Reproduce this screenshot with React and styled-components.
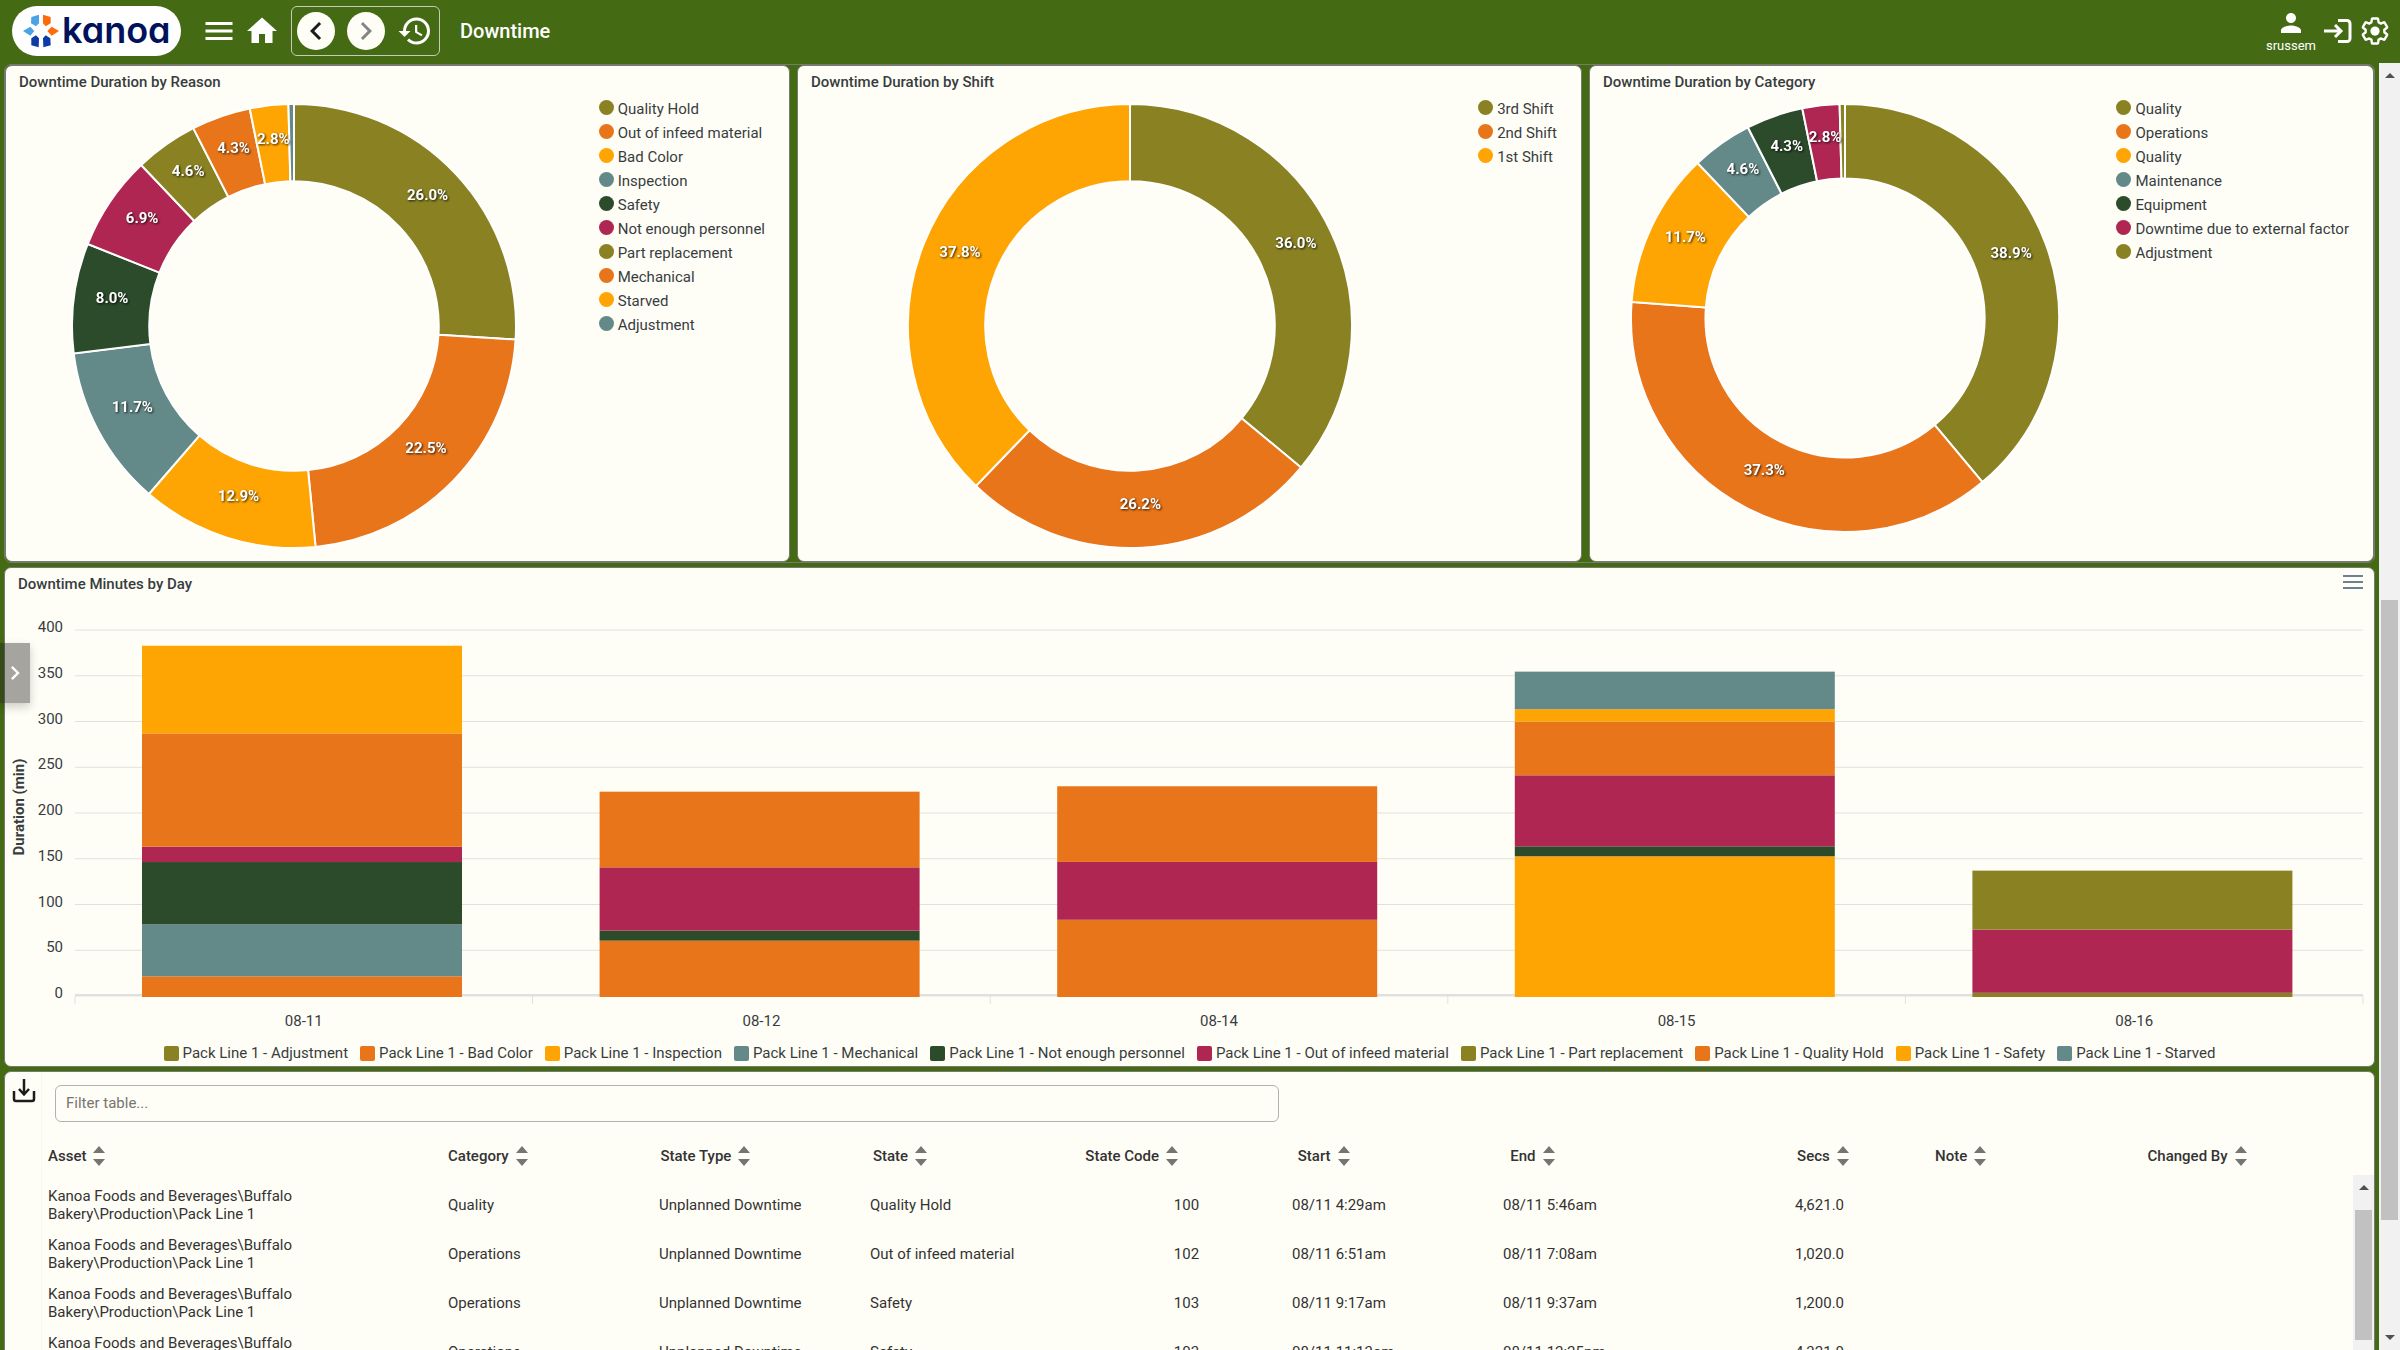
import React from 'react';
import styled, { createGlobalStyle } from 'styled-components';
import { MdMenu, MdHome, MdHistory, MdPerson, MdChevronLeft, MdChevronRight } from 'react-icons/md';

const olive = '#8a8222';
const orange = '#e8751a';
const amber = '#ffa503';
const teal = '#648989';
const forest = '#2b4b2a';
const berry = '#af2653';

const palette = [olive, orange, amber, teal, forest, berry];

const donuts = [
    {
        title: 'Downtime Duration by Reason',
        radius: 222,
        slices: [
            ['Quality Hold', 26.0],
            ['Out of infeed material', 22.5],
            ['Bad Color', 12.9],
            ['Inspection', 11.7],
            ['Safety', 8.0],
            ['Not enough personnel', 6.9],
            ['Part replacement', 4.6],
            ['Mechanical', 4.3],
            ['Starved', 2.8],
            ['Adjustment', 0.4],
        ],
    },
    {
        title: 'Downtime Duration by Shift',
        radius: 222,
        slices: [
            ['3rd Shift', 36.0],
            ['2nd Shift', 26.2],
            ['1st Shift', 37.8],
        ],
    },
    {
        title: 'Downtime Duration by Category',
        radius: 214,
        slices: [
            ['Quality', 38.9],
            ['Operations', 37.3],
            ['Quality', 11.7],
            ['Maintenance', 4.6],
            ['Equipment', 4.3],
            ['Downtime due to external factor', 2.8],
            ['Adjustment', 0.4],
        ],
    },
];

const series = [
    'Adjustment',
    'Bad Color',
    'Inspection',
    'Mechanical',
    'Not enough personnel',
    'Out of infeed material',
    'Part replacement',
    'Quality Hold',
    'Safety',
    'Starved',
];

const seriesColor = [olive, orange, amber, teal, forest, berry, olive, orange, amber, teal];

// minutes per series, in the order of the list above
const days = [
    { day: '08-11', minutes: [0, 22.6, 0, 56.8, 68.1, 16.8, 0, 123.8, 95.8, 0] },
    { day: '08-12', minutes: [0, 61.6, 0, 0, 10.9, 69.2, 0, 82.7, 0, 0] },
    { day: '08-14', minutes: [0, 84.4, 0, 0, 0, 63.2, 0, 82.7, 0, 0] },
    { day: '08-15', minutes: [0, 0, 153.8, 0, 10.9, 77.6, 0, 58.6, 13.6, 41.1] },
    { day: '08-16', minutes: [4.6, 0, 0, 0, 0, 69.1, 64.4, 0, 0, 0] },
];

const columns = ['Asset', 'Category', 'State Type', 'State', 'State Code', 'Start', 'End', 'Secs', 'Note', 'Changed By'];

const asset = 'Kanoa Foods and Beverages\\Buffalo Bakery\\Production\\Pack Line 1';

const rows = [
    [asset, 'Quality', 'Unplanned Downtime', 'Quality Hold', '100', '08/11 4:29am', '08/11 5:46am', '4,621.0', '', ''],
    [asset, 'Operations', 'Unplanned Downtime', 'Out of infeed material', '102', '08/11 6:51am', '08/11 7:08am', '1,020.0', '', ''],
    [asset, 'Operations', 'Unplanned Downtime', 'Safety', '103', '08/11 9:17am', '08/11 9:37am', '1,200.0', '', ''],
    [asset, 'Operations', 'Unplanned Downtime', 'Safety', '103', '08/11 11:13am', '08/11 12:25pm', '4,321.0', '', ''],
];

const Logo = () => (
    <LogoLink href="#home" aria-label="kanoa">
        <svg width="36" height="36" viewBox="41 23 108 108" aria-hidden="true">
            <path fill="#4aa3e4" d="M66 35l23-7v26l-9 9-15-9z" />
            <path fill="#4aa3e4" d="M41 77l22-13 12 13-12 14z" />
            <path fill="#ff6b0a" d="M124 35l-23-7v26l8 9 15-9z" />
            <path fill="#ff6b0a" d="M149 77l-22-13-13 13 13 14z" />
            <path fill="#0c3ba4" d="M66 120l22 6 1-27-9-9-14 9z" />
            <path fill="#0c3ba4" d="M124 120l-22 6-1-27 8-9 14 9z" />
        </svg>
        <span>kanoa</span>
    </LogoLink>
);

const LoginIcon = () => (
    <svg width="28" height="26" viewBox="0 0 28 26" fill="none" stroke="#fff" strokeWidth="3" aria-hidden="true">
        <path d="M0 13h17M11 7l6 6-6 6" />
        <path d="M14 2.500h9a3 3 0 0 1 3 3v15a3 3 0 0 1-3 3h-9" />
    </svg>
);

const GearIcon = () => (
    <svg width="30" height="30" viewBox="0 0 24 24" fill="none" stroke="#fff" strokeWidth="1.9" aria-hidden="true">
        <path strokeLinejoin="round" d="M19.430 12.980c.04-.32.07-.64.07-.98 0-.34-.03-.66-.07-.98l2.110-1.650c.19-.15.24-.42.12-.64l-2-3.460a.5.5 0 0 0-.61-.22l-2.490 1c-.52-.4-1.080-.73-1.690-.98l-.38-2.650A.488.488 0 0 0 14 2h-4c-.25 0-.46.18-.49.42l-.38 2.650c-.61.25-1.170.59-1.690.98l-2.490-1a.566.566 0 0 0-.18-.03c-.17 0-.34.09-.43.25l-2 3.460c-.13.22-.07.49.12.64l2.110 1.650c-.04.32-.07.65-.07.98 0 .33.03.66.07.98l-2.110 1.650c-.19.15-.24.42-.12.64l2 3.460a.5.5 0 0 0 .61.22l2.490-1c.52.4 1.080.73 1.690.98l.38 2.650c.03.24.24.42.49.42h4c.25 0 .46-.18.49-.42l.38-2.650c.61-.25 1.170-.59 1.690-.98l2.490 1c.06.02.12.03.18.03.17 0 .34-.09.43-.25l2-3.460c.12-.22.07-.49-.12-.64z" />
        <circle cx="12" cy="12" r="3.700" fill="#fff" stroke="none" />
    </svg>
);

const DownloadIcon = () => (
    <svg width="24" height="24" viewBox="0 0 24 24" fill="none" stroke="#1c1c1c" strokeWidth="2.500" aria-hidden="true">
        <path d="M12 0v15M7 10l5 5.500 5-5.500" />
        <path d="M2 12v8q0 2 2 2h16q2 0 2-2v-8" />
    </svg>
);

const SortIcon = () => (
    <svg width="12" height="20" viewBox="0 0 12 20" fill="#757571" aria-hidden="true">
        <path d="M6 0l6 7H0zM6 20l6-7H0z" />
    </svg>
);

const point = (r, turn) => [r * Math.sin(turn * 2 * Math.PI), -r * Math.cos(turn * 2 * Math.PI)];

const Donut = ({ slices, radius, title }) => {
    const inner = radius * 0.652;
    const total = slices.reduce((sum, slice) => sum + slice[1], 0);
    const size = radius * 2 + 4;
    let turn = 0;
    const arcs = slices.map(([name, value], i) => {
        const start = turn;
        turn += value / total;
        const large = turn - start > 0.5 ? 1 : 0;
        const a = point(radius, start);
        const b = point(radius, turn);
        const c = point(inner, turn);
        const d = point(inner, start);
        return {
            key: name + i,
            value,
            color: palette[i % palette.length],
            label: point((radius + inner) / 2, (start + turn) / 2),
            path: `M${a}A${radius} ${radius} 0 ${large} 1 ${b}L${c}A${inner} ${inner} 0 ${large} 0 ${d}Z`,
        };
    });

    return (
        <svg width={size} height={size} viewBox={`${-size / 2} ${-size / 2} ${size} ${size}`} role="img" aria-label={title}>
            {arcs.map((arc) => (
                <path key={arc.key} d={arc.path} fill={arc.color} stroke="#fff" strokeWidth="2" />
            ))}
            {arcs.filter((arc) => arc.value > 1).map((arc) => (
                <SliceLabel key={arc.key} x={arc.label[0]} y={arc.label[1]}>{arc.value.toFixed(1)}%</SliceLabel>
            ))}
        </svg>
    );
};

const DonutPanel = ({ title, slices, radius }) => (
    <DonutBox>
        <PanelTitle>{title}</PanelTitle>
        <DonutBody>
            <DonutArea>
                <Donut slices={slices} radius={radius} title={title} />
            </DonutArea>
            <DonutLegend>
                {slices.map(([name], i) => (
                    <li key={name + i}>
                        <Dot $color={palette[i % palette.length]} />
                        {name}
                    </li>
                ))}
            </DonutLegend>
        </DonutBody>
    </DonutBox>
);

const BarChart = () => {
    const left = 70;
    const right = 2358;
    const base = 396;
    const perMinute = 0.915;
    const step = (right - left) / days.length;
    const barWidth = 320;

    return (
        <svg width="100%" viewBox="0 0 2369 435" role="img" aria-label="Downtime Minutes by Day">
            {[0, 50, 100, 150, 200, 250, 300, 350, 400].map((tick) => (
                <g key={tick}>
                    <line x1={left} x2={right} y1={base - tick * perMinute} y2={base - tick * perMinute} stroke="#e0e0e0" />
                    <AxisText x={left - 12} y={base - tick * perMinute + 2} textAnchor="end">{tick}</AxisText>
                </g>
            ))}
            <line x1={left} x2={right} y1={base - 1} y2={base - 1} stroke="#e0e0e0" strokeWidth="2" />
            {[0, 1, 2, 3, 4, 5].map((i) => (
                <line key={i} x1={left + i * step} x2={left + i * step} y1={base} y2={base + 8} stroke="#e0e0e0" />
            ))}
            {days.map(({ day, minutes }, i) => {
                let top = base + 1;
                return (
                    <g key={day}>
                        {minutes.map((value, s) => {
                            const height = value * perMinute;
                            top -= height;
                            return value > 0 && (
                                <rect key={series[s]} x={137 + i * step} y={top} width={barWidth} height={height} fill={seriesColor[s]} />
                            );
                        })}
                        <AxisText x={left + (i + 0.5) * step} y={426} textAnchor="middle">{day}</AxisText>
                    </g>
                );
            })}
            <AxisTitle transform="translate(19 207) rotate(-90)" textAnchor="middle">Duration (min)</AxisTitle>
        </svg>
    );
};

const App = () => {
    return (
        <Page>
            <GlobalStyle />
            <Header>
                <Logo />
                <MenuGroup>
                    <IconButton aria-label="Menu"><MdMenu size={36} /></IconButton>
                    <IconButton aria-label="Home"><MdHome size={36} /></IconButton>
                </MenuGroup>
                <HistoryGroup>
                    <RoundButton aria-label="Back"><MdChevronLeft size={36} /></RoundButton>
                    <RoundButton aria-label="Forward" $muted><MdChevronRight size={36} /></RoundButton>
                    <IconButton aria-label="History"><MdHistory size={36} /></IconButton>
                </HistoryGroup>
                <PageTitle>Downtime</PageTitle>
                <UserGroup>
                    <UserButton>
                        <MdPerson size={30} />
                        srussem
                    </UserButton>
                    <IconButton aria-label="Log in"><LoginIcon /></IconButton>
                    <IconButton aria-label="Settings"><GearIcon /></IconButton>
                </UserGroup>
            </Header>

            <Main>
                <Content>
                    <DonutRow>
                        {donuts.map((donut) => (
                            <DonutPanel key={donut.title} {...donut} />
                        ))}
                    </DonutRow>

                    <ChartPanel>
                        <ChartHeader>
                            <h2>Downtime Minutes by Day</h2>
                            <ChartMenu aria-label="Chart menu">
                                <svg width="20" height="14" viewBox="0 0 20 14" stroke="#6e8192" strokeWidth="2" aria-hidden="true">
                                    <path d="M0 1h20M0 7h20M0 13h20" />
                                </svg>
                            </ChartMenu>
                        </ChartHeader>
                        <BarChart />
                        <ChartLegend>
                            {series.map((name, i) => (
                                <li key={name}>
                                    <Square $color={seriesColor[i]} />
                                    Pack Line 1 - {name}
                                </li>
                            ))}
                        </ChartLegend>
                    </ChartPanel>

                    <TablePanel>
                        <Tools>
                            <IconButton aria-label="Download"><DownloadIcon /></IconButton>
                        </Tools>
                        <TableArea>
                            <Filter type="text" placeholder="Filter table..." aria-label="Filter table" />
                            <TableGrid>
                                <Table>
                                    <thead>
                                        <tr>
                                            {columns.map((name) => (
                                                <HeadCell key={name} $center={name === 'Secs'}>
                                                    <button>{name}<SortIcon /></button>
                                                </HeadCell>
                                            ))}
                                        </tr>
                                    </thead>
                                    <tbody>
                                        {rows.map((row, r) => (
                                            <tr key={r}>
                                                {row.map((cell, c) => (
                                                    <Cell key={c} $center={columns[c] === 'Secs' || columns[c] === 'State Code'}>{cell}</Cell>
                                                ))}
                                            </tr>
                                        ))}
                                    </tbody>
                                </Table>
                                <TableScroll>
                                    <ArrowUp />
                                    <Thumb $height={130} />
                                </TableScroll>
                            </TableGrid>
                        </TableArea>
                    </TablePanel>
                </Content>

                <PageScroll>
                    <ArrowUp />
                    <Thumb $height={620} />
                    <ArrowDown />
                </PageScroll>
            </Main>

            <Drawer aria-label="Open drawer"><MdChevronRight size={28} /></Drawer>
        </Page>
    );
};

export default App;

const GlobalStyle = createGlobalStyle`
* {
    box-sizing: border-box;
}

body {
    margin: 0;
    font-family: Roboto, sans-serif;
    font-size: 15px;
    color: #373d3f;
    background-color: #446a14;
}

h1, h2, ul {
    margin: 0;
    padding: 0;
}

ul {
    list-style: none;
}

button {
    padding: 0;
    border: 0;
    background: none;
    color: inherit;
    font: inherit;
    cursor: pointer;
}

svg {
    display: block;
    flex-shrink: 0;
}
`;

const Page = styled.div`
position: relative;
height: 100vh;
display: flex;
flex-direction: column;
overflow: hidden;
`;

const Header = styled.header`
flex: none;
height: 63px;
padding: 6px 10px 7px 12px;
display: flex;
align-items: center;
color: #fff;
`;

const LogoLink = styled.a`
width: 169px;
height: 50px;
padding-left: 11px;
display: flex;
align-items: center;
gap: 3px;
border-radius: 25px;
background-color: #fff;
color: #00125c;
font-family: Inter, sans-serif;
font-size: 36px;
font-weight: 600;
font-feature-settings: "cv11";
line-height: 44px;
text-decoration: none;

span {
    padding-bottom: 2px;
}
`;

const MenuGroup = styled.div`
margin-left: 20px;
display: flex;
gap: 7px;
`;

const IconButton = styled.button`
display: flex;
align-items: center;
`;

const HistoryGroup = styled.div`
height: 50px;
margin-left: 11px;
padding: 0 6px 0 5px;
display: flex;
align-items: center;
gap: 12px;
border: 1px solid #c5cbb4;
border-radius: 6px;
`;

const RoundButton = styled.button`
width: 38px;
height: 38px;
display: flex;
align-items: center;
justify-content: center;
border-radius: 50%;
background-color: #fffef6;
color: ${({ $muted }) => ($muted ? '#858585' : '#1c1c1c')};
`;

const PageTitle = styled.h1`
margin-left: 20px;
font-size: 20px;
font-weight: 500;
`;

const UserGroup = styled.div`
margin-left: auto;
display: flex;
align-items: center;
gap: 8px;
`;

const UserButton = styled.button`
display: flex;
flex-direction: column;
align-items: center;
font-size: 13px;
line-height: 16px;
`;

const Main = styled.main`
flex: 1;
min-height: 0;
display: flex;
`;

const Content = styled.div`
flex: 1;
min-width: 0;
padding: 1px 4px 0;
display: flex;
flex-direction: column;
gap: 4px;
overflow: hidden;
`;

const DonutRow = styled.section`
flex: none;
display: grid;
grid-template-columns: repeat(3, 1fr);
gap: 7px;
border: 1px solid #777a70;
border-radius: 7px;
`;

const Panel = styled.section`
flex: none;
border: 1px solid #777a70;
border-radius: 7px;
background-color: #fffef6;
`;

const DonutBox = styled(Panel)`
height: 497px;
display: flex;
flex-direction: column;
`;

const PanelTitle = styled.h2`
padding: 7px 12px 1px 13px;
font-size: 15px;
font-weight: 500;
line-height: 18px;
`;

const DonutBody = styled.div`
flex: 1;
display: flex;
align-items: flex-start;
gap: 16px;
`;

const DonutArea = styled.div`
flex: 1;
padding-top: 10px;
display: flex;
justify-content: center;
`;

const SliceLabel = styled.text`
fill: #fff;
font-size: 15px;
font-weight: 700;
text-anchor: middle;
filter: drop-shadow(1px 1px 1px rgba(0, 0, 0, 0.8));
`;

const DonutLegend = styled.ul`
padding: 5px 24px 0 0;

li {
    height: 24px;
    display: flex;
    align-items: center;
    gap: 4px;
}
`;

const Dot = styled.span`
width: 15px;
height: 15px;
margin-bottom: 4px;
border-radius: 50%;
background-color: ${({ $color }) => $color};
`;

const ChartPanel = styled(Panel)`
min-height: 500px;
`;

const ChartHeader = styled.div`
height: 32px;
padding: 7px 11px 0 13px;
display: flex;
align-items: flex-start;
justify-content: space-between;

h2 {
    font-size: 15px;
    font-weight: 500;
    line-height: 18px;
}
`;

const ChartMenu = styled.button`
display: block;
`;

const AxisText = styled.text`
fill: #373d3f;
font-size: 15px;
`;

const AxisTitle = styled.text`
fill: #373d3f;
font-size: 15px;
font-weight: 700;
`;

const ChartLegend = styled.ul`
padding-top: 9px;
display: flex;
justify-content: center;
gap: 12px;

li {
    display: flex;
    align-items: center;
    gap: 4px;
    line-height: 18px;
}
`;

const Square = styled.span`
width: 15px;
height: 15px;
border-radius: 2px;
background-color: ${({ $color }) => $color};
`;

const TablePanel = styled(Panel)`
min-height: 400px;
display: flex;
`;

const Tools = styled.div`
width: 37px;
padding: 7px 0 0 7px;
border-right: 1px solid #f8f7f0;
`;

const TableArea = styled.div`
flex: 1;
display: flex;
flex-direction: column;
`;

const Filter = styled.input`
width: 1224px;
max-width: 90%;
height: 37px;
margin: 13px 0 0 13px;
padding: 0 10px 1px;
border: 1px solid #b2b2ae;
border-radius: 6px;
background: transparent;
color: #373d3f;
font-family: Roboto, sans-serif;
font-size: 15px;

&::placeholder {
    color: #757571;
}
`;

/* the scroll bar shares the table's grid cell, below the header row */
const TableGrid = styled.div`
flex: 1;
display: grid;

> * {
    grid-area: 1 / 1;
}
`;

const Table = styled.table`
display: block;
color: #333;

thead, tbody {
    display: block;
    padding-left: 6px;
}

thead {
    padding-top: 14px;
    padding-right: 14px;
}

tbody {
    padding-top: 4px;
    padding-right: 27px;
}

tr {
    display: grid;
    grid-template-columns: 400px repeat(9, 1fr);
    align-items: center;
}
`;

const HeadCell = styled.th`
height: 40px;
padding: 0;
padding-right: ${({ $center }) => ($center ? '12px' : '0')};
display: flex;
align-items: center;
justify-content: ${({ $center }) => ($center ? 'center' : 'flex-start')};
font-weight: 500;

button {
    display: flex;
    align-items: center;
    gap: 7px;
}
`;

const Cell = styled.td`
height: 49px;
padding: 0;
display: flex;
align-items: center;
justify-content: ${({ $center }) => ($center ? 'center' : 'flex-start')};
line-height: 18px;
`;

const Scroll = styled.div`
width: 21px;
padding: 10px 2px;
display: flex;
flex-direction: column;
align-items: center;
background-color: #f1f1f1;
`;

const PageScroll = styled(Scroll)`
flex: none;

> :nth-child(2) {
    margin-top: auto;
    margin-bottom: 115px;
}
`;

const TableScroll = styled(Scroll)`
justify-self: end;
margin-top: 53px;
gap: 20px;
`;

const Thumb = styled.div`
width: 17px;
height: ${({ $height }) => $height}px;
background-color: #c1c1c1;
`;

const ArrowUp = styled.span`
border: 5px solid transparent;
border-top: 0;
border-bottom-color: #505050;
`;

const ArrowDown = styled.span`
border: 5px solid transparent;
border-bottom: 0;
border-top-color: #505050;
`;

const Drawer = styled.button`
position: absolute;
left: 0;
top: 643px;
width: 30px;
height: 60px;
display: flex;
align-items: center;
justify-content: center;
background-color: rgba(30, 30, 30, 0.4);
box-shadow: 0 4px 10px rgba(0, 0, 0, 0.2);
color: #fff;
`;
